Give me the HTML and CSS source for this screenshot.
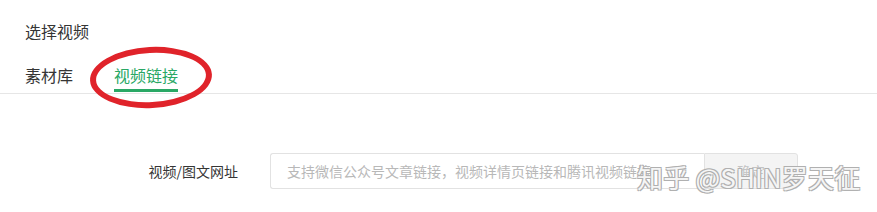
FILE: index.html
```html
<!DOCTYPE html>
<html lang="zh">
<head>
<meta charset="utf-8">
<link rel="stylesheet" href="styles.css">
</head>
<body>
<div class="page">
  <div class="title">选择视频</div>
  <div class="tabs">
    <div class="tab">素材库</div>
    <div class="tab active">视频链接</div>
    <div class="mark"></div>
  </div>
  <div class="form-row">
    <label class="label">视频/图文网址</label>
    <div class="field">
      <input class="input" type="text" placeholder="支持微信公众号文章链接，视频详情页链接和腾讯视频链接">
      <button class="btn">确定</button>
    </div>
  </div>
  <div class="watermark">知乎 @SHIN罗天征</div>
</div>
</body>
</html>
```

FILE: styles.css
```css
* { box-sizing: border-box; }
html, body { margin: 0; padding: 0; background: #fff; }
body {
  font-family: "Noto Sans CJK SC", "Noto Sans", sans-serif;
  color: #333;
}
.page { position: relative; width: 877px; height: 212px; overflow: hidden; }
.title {
  padding: 20px 0 0 25px;
  font-size: 16px;
  line-height: 22px;
  color: #353535;
}
.tabs {
  position: relative;
  display: flex;
  gap: 41px;
  margin-top: 22px;
  padding-left: 25px;
  border-bottom: 1px solid #e6e6e6;
}
.tab {
  font-size: 16px;
  line-height: 22px;
  padding-bottom: 3px;
  border-bottom: 3px solid transparent;
  margin-bottom: 1px;
  color: #353535;
}
.tab.active {
  color: #2aa865;
  border-bottom-color: #2aa865;
}
.mark {
  position: absolute;
  left: 90px;
  top: -17px;
  width: 122px;
  height: 61px;
  border: 6px solid #e0232a;
  border-radius: 50%;
  transform: rotate(-3deg);
}
.form-row {
  display: grid;
  grid-template-columns: 238px auto;
  column-gap: 32px;
  align-items: center;
  margin-top: 59px;
}
.label {
  text-align: right;
  font-size: 14px;
  color: #353535;
}
.field { display: flex; height: 36px; }
.input {
  width: 434px;
  height: 36px;
  border: 1px solid #e2e2e2;
  border-right: none;
  border-radius: 3px 0 0 3px;
  padding: 0 16px;
  font-family: inherit;
  font-size: 14px;
  color: #333;
  outline: none;
}
.input::placeholder { color: #b8b8b8; }
.btn {
  width: 94px;
  height: 36px;
  border: 1px solid #e2e2e2;
  border-radius: 0 3px 3px 0;
  background: #f4f4f4;
  font-family: inherit;
  font-size: 14px;
  color: #c4c4c4;
}
.watermark {
  position: absolute;
  left: 637px;
  top: 160px;
  font-size: 26px;
  line-height: 34px;
  color: rgba(255,255,255,0.9);
  letter-spacing: 0.2px;
  text-shadow: -1px -1px 0 #b0b0b0, 1px -1px 0 #b0b0b0, -1px 1px 0 #b0b0b0, 1px 1px 0 #b0b0b0;
  white-space: nowrap;
}
```
